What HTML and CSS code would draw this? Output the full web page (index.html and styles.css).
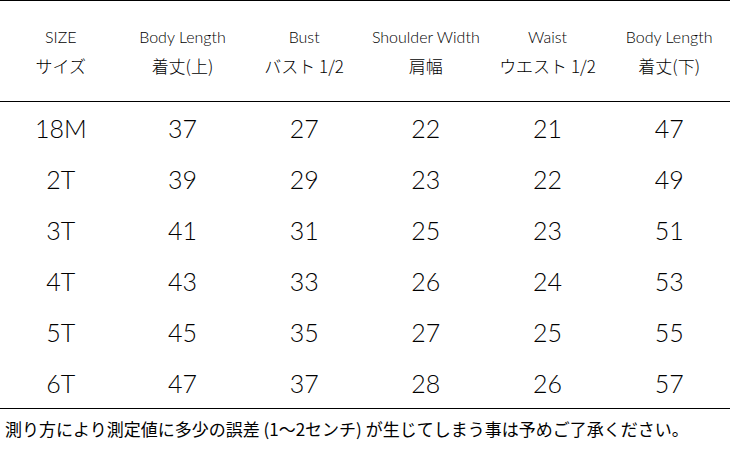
FILE: index.html
```html
<!DOCTYPE html>
<html lang="ja">
<head>
<meta charset="utf-8">
<link rel="stylesheet" href="styles.css">
</head>
<body>
<div class="sheet">
  <table class="size-table">
    <thead>
      <tr>
        <th><span class="en">SIZE</span><span class="ja">サイズ</span></th>
        <th><span class="en">Body Length</span><span class="ja">着丈(上)</span></th>
        <th><span class="en">Bust</span><span class="ja">バスト 1/2</span></th>
        <th><span class="en">Shoulder Width</span><span class="ja">肩幅</span></th>
        <th><span class="en">Waist</span><span class="ja">ウエスト 1/2</span></th>
        <th><span class="en">Body Length</span><span class="ja">着丈(下)</span></th>
      </tr>
    </thead>
    <tbody>
      <tr><td>18M</td><td>37</td><td>27</td><td>22</td><td>21</td><td>47</td></tr>
      <tr><td>2T</td><td>39</td><td>29</td><td>23</td><td>22</td><td>49</td></tr>
      <tr><td>3T</td><td>41</td><td>31</td><td>25</td><td>23</td><td>51</td></tr>
      <tr><td>4T</td><td>43</td><td>33</td><td>26</td><td>24</td><td>53</td></tr>
      <tr><td>5T</td><td>45</td><td>35</td><td>27</td><td>25</td><td>55</td></tr>
      <tr><td>6T</td><td>47</td><td>37</td><td>28</td><td>26</td><td>57</td></tr>
    </tbody>
  </table>
  <p class="note">測り方により測定値に多少の誤差 (1〜2センチ) が生じてしまう事は予めご了承ください。</p>
</div>
</body>
</html>
```

FILE: styles.css
```css
html, body {
  margin: 0;
  padding: 0;
  background: #fff;
}
body {
  width: 730px;
  height: 450px;
  overflow: hidden;
  color: #000;
  font-family: "Lato", "Noto Sans CJK JP", sans-serif;
}
.sheet {
  display: flex;
  flex-direction: column;
}
.size-table {
  width: 730px;
  border-collapse: collapse;
  table-layout: fixed;
  border-top: 1px solid #000;
  border-bottom: 1px solid #000;
}
.size-table th {
  height: 100px;
  padding: 0;
  font-weight: 300;
  border-bottom: 1px solid #000;
  text-align: center;
  vertical-align: middle;
}
.size-table th .en {
  display: block;
  font-size: 16px;
  line-height: 29px;
}
.size-table th .ja {
  display: block;
  font-size: 17px;
  line-height: 29px;
  font-weight: 300;
  font-family: "Noto Sans CJK JP", sans-serif;
}
.size-table td {
  height: 51px;
  padding: 0;
  text-align: center;
  vertical-align: middle;
  font-size: 25px;
  font-weight: 300;
}
.note {
  margin: 0;
  padding: 7px 0 0 5px;
  font-family: "Noto Sans CJK JP", sans-serif;
  font-size: 17px;
  font-weight: 400;
  line-height: 26px;
  white-space: nowrap;
}
```
